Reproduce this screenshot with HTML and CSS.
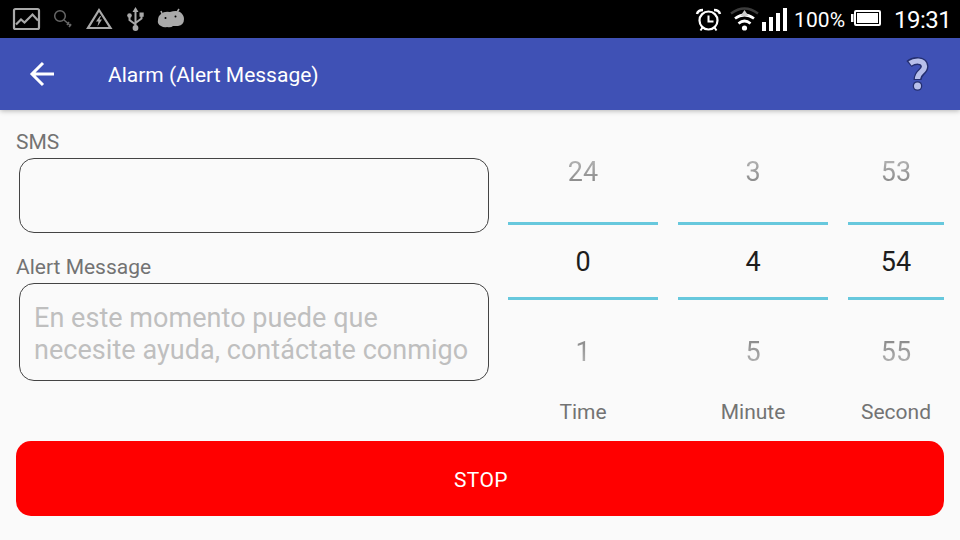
FILE: index.html
```html
<!DOCTYPE html>
<html lang="en">
<head>
<meta charset="utf-8">
<title>Alarm (Alert Message)</title>
<link rel="stylesheet" href="styles.css">
</head>
<body>
<div class="status">
  <svg class="notifications" width="200" height="38" viewBox="0 0 200 38" fill="none" stroke="#a9a9a9">
    <rect x="14" y="9" width="25" height="20" rx="1.5" stroke-width="2.200"/>
    <path d="M16 24.500l5-5 3.500 3 8-8 5.500 6" stroke-width="2.200"/>
    <g stroke="#676767" stroke-width="1.5"><circle cx="60" cy="16" r="5.3"/><path d="M64 20l7 6M69 22l-2 3M71 24l-2 3"/></g>
    <path d="M99 10L88 28h22.500z" stroke-width="2.200"/>
    <path d="M100 16l-4 5.500h2.500l-1 5 4.500-7H99.500l1.500-3.500z" fill="#a9a9a9" stroke="none"/>
    <path d="M135.500 11v15M129.500 16v4l6 4.500M141.500 16v2.500l-6 4.500" stroke-width="2"/>
    <g fill="#a9a9a9" stroke="none"><path d="M135.500 7l3 5h-6zM139.500 12.500h4.200v4.200h-4.200z"/><circle cx="129.500" cy="15.500" r="2.300"/><circle cx="135.500" cy="28" r="2.900"/></g>
    <path d="M161 11l2 5M179 9l-3 5" stroke-width="1.6"/>
    <path d="M161 14q3-3 9-2 6-2 10 0 4 3 4 7 0 6-6 7-4 0-5 0-2 2-6 1-3 1-6-1-4-2-3-6 0-4 3-6z" fill="#a9a9a9" stroke="none"/>
    <g fill="#000" stroke="none"><circle cx="165.500" cy="18" r="1"/><circle cx="175.500" cy="16.500" r="1"/></g>
  </svg>
  <div class="indicators">
    <svg width="96" height="38" viewBox="0 0 96 38" fill="none" stroke="#fff">
      <circle cx="16.500" cy="20.500" r="9" stroke-width="2.200"/>
      <path d="M16.500 15.500v6h5M10.500 27.500l-2 3M22.500 27.500l2 3" stroke-width="2"/>
      <path d="M5 14q1-4 6-4M22 10q5 0 6 4" stroke-width="2.500"/>
      <path d="M39 13.500q13.500-10 27 0" stroke="#3c3c3c" stroke-width="2.400"/>
      <path d="M43 18.500q9.500-7 19 0M46.500 23.500q6-5 12 0" stroke-width="2.700"/>
      <path d="M52.500 10l4 6h-8z" fill="#ccc" stroke="none"/>
      <g fill="#fff" stroke="none"><circle cx="52.500" cy="28" r="2.600"/><path d="M70 22h4v9h-4zM77 17h4v14h-4zM84 13h4v18h-4zM91 8h4v23h-4z"/></g>
    </svg>
    <span class="percent">100%</span>
    <svg class="battery" width="32" height="38" viewBox="0 0 32 38"><rect x="4" y="11" width="25" height="14" rx="1" fill="none" stroke="#fff" stroke-width="2"/><path d="M6 13h21v10H6zM0 14h2.500v8H0z" fill="#fff"/></svg>
    <span class="clock">19:31</span>
  </div>
</div>
<header class="toolbar">
  <svg width="28" height="26" viewBox="0 0 28 26" fill="none" stroke="#fff" stroke-width="3"><path d="M26 13H5M15 2L4 13l11 11"/></svg>
  <h1 class="title">Alarm (Alert Message)</h1>
  <svg class="help" width="26" height="38" viewBox="0 0 26 38" fill="none"><path d="M3 9C7 5.500 18 4 18.500 11.500C18.500 17 11.500 17 11.500 25" stroke="#242f70" stroke-width="8"/><circle cx="11.500" cy="31" r="4.800" fill="#242f70"/><path d="M4 8.400C8 5.500 18 4 18.500 11.500C18.500 17 11.500 17 11.500 24" stroke="#b7bfea" stroke-width="5.200"/><circle cx="11.500" cy="31" r="3.500" fill="#b7bfea"/></svg>
</header>
<main class="content">
  <section class="fields">
    <div class="label">SMS</div>
    <div class="box sms"></div>
    <div class="label second">Alert Message</div>
    <div class="box message">En este momento puede que<br>necesite ayuda, contáctate conmigo</div>
  </section>
  <section class="pickers">
    <div class="picker"><span class="prev">24</span><span class="current">0</span><span class="next">1</span><span class="unit">Time</span></div>
    <div class="picker"><span class="prev">3</span><span class="current">4</span><span class="next">5</span><span class="unit">Minute</span></div>
    <div class="picker"><span class="prev">53</span><span class="current">54</span><span class="next">55</span><span class="unit">Second</span></div>
  </section>
</main>
<div class="stop">STOP</div>
</body>
</html>
```
FILE: styles.css
```css
* { box-sizing: border-box; }
body { margin: 0; width: 960px; height: 540px; overflow: hidden; background: #fafafa; color: #737373; font: 21px/28px Roboto, sans-serif; }
svg { display: block; flex: none; }
.status { height: 38px; background: #000; color: #fff; display: flex; justify-content: space-between; }
.indicators { display: flex; width: 268px; line-height: 40px; white-space: nowrap; }
.percent { width: 59px; margin-left: 6px; margin-right: -2px; letter-spacing: .1px; }
.clock { font-size: 24px; letter-spacing: -.5px; padding-left: 11px; }
.toolbar { height: 72px; background: #3f51b5; color: #fff; display: flex; align-items: center; padding: 0 28px; box-shadow: 0 1px 5px rgba(0,0,0,.28); }
.title { margin: 2px 0 0 52px; font-size: 21px; font-weight: 400; }
.help { margin-left: auto; }
.content { display: flex; height: 331px; padding: 18px 16px 0; }
.fields { width: 492px; }
.label { height: 30px; }
.second { margin-top: 20px; }
.box { width: 470px; margin-left: 3px; border: 1px solid #444; border-radius: 15px; }
.sms { height: 75px; }
.message { height: 98px; padding: 18px 14px; font-size: 27px; line-height: 32px; letter-spacing: .04px; color: #bfbfbf; white-space: nowrap; }
.pickers { display: grid; grid-template-columns: 150px 150px 96px; column-gap: 20px; }
.picker { display: grid; grid-template-rows: 94px 78px 94px 40px; text-align: center; font-size: 27px; }
.prev { line-height: 88px; color: transparent; background: linear-gradient(#b5b5b5 30px, #888 56px); background-clip: text; }
.current { border-top: 3px solid #67c8dd; border-bottom: 3px solid #67c8dd; color: #1d1d1d; line-height: 74px; }
.next { line-height: 104px; color: transparent; background: linear-gradient(#888 39px, #b5b5b5 65px); background-clip: text; }
.unit { font-size: 21px; line-height: 36px; }
.stop { height: 75px; margin: 0 16px; border-radius: 15px; background: #f00; color: #fff; line-height: 78px; letter-spacing: .4px; text-indent: 2px; text-align: center; }
```
